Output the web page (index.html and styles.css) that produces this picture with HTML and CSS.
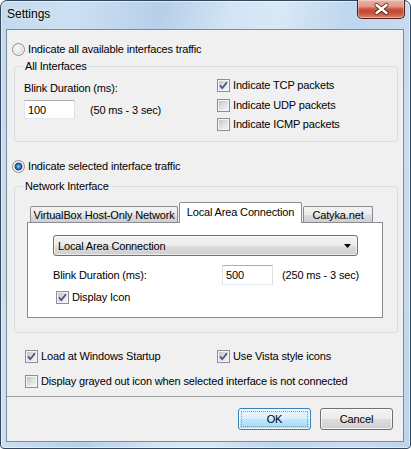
FILE: index.html
```html
<!DOCTYPE html>
<html>
<head>
<meta charset="utf-8">
<title>Settings</title>
<link rel="stylesheet" href="styles.css">
</head>
<body>
<div class="window">
  <div class="titlebar">
    <span class="title">Settings</span>
    <div class="close">
      <svg width="46" height="18" viewBox="0 0 46 18">
        <path d="M18.5 5 L28.5 13 M28.5 5 L18.5 13" stroke="#3a1810" stroke-width="4.2" stroke-linecap="round" fill="none" opacity="0.75"/>
        <path d="M18.5 5 L28.5 13 M28.5 5 L18.5 13" stroke="#ffffff" stroke-width="2.4" stroke-linecap="round" fill="none"/>
      </svg>
    </div>
  </div>
  <div class="client">
    <div class="content">
      <label class="opt row1"><span class="rb"></span>Indicate all available interfaces traffic</label>

      <div class="group g1">
        <div class="gtitle">All Interfaces</div>
        <div class="g1-body">
          <div class="g1-left">
            <div class="lbl">Blink Duration (ms):</div>
            <div class="input-row">
              <span class="edit">100</span>
              <span class="range">(50 ms - 3 sec)</span>
            </div>
          </div>
          <div class="g1-right">
            <label class="opt"><span class="cb"><svg width="11" height="11" viewBox="0 0 11 11"><path d="M2 5.4 L4.3 8.2 L8.9 2.2"/></svg></span>Indicate TCP packets</label>
            <label class="opt udp"><span class="cb"></span>Indicate UDP packets</label>
            <label class="opt icmp"><span class="cb"></span>Indicate ICMP packets</label>
          </div>
        </div>
      </div>

      <label class="opt row2"><span class="rb on"></span>Indicate selected interface traffic</label>

      <div class="group g2">
        <div class="gtitle">Network Interface</div>
        <div class="tabctl">
          <div class="tabs">
            <div class="tab t1">VirtualBox Host-Only Network</div>
            <div class="tab sel">Local Area Connection</div>
            <div class="tab t3">Catyka.net</div>
          </div>
          <div class="panel">
            <div class="combo">
              <span>Local Area Connection</span>
              <svg width="7" height="4" viewBox="0 0 7 4"><path d="M0 0 H7 L3.5 4 Z" fill="#000"/></svg>
            </div>
            <div class="blink-row">
              <span class="lbl2">Blink Duration (ms):</span>
              <span class="edit e500">500</span>
              <span class="range2">(250 ms - 3 sec)</span>
            </div>
            <label class="opt di"><span class="cb"><svg width="11" height="11" viewBox="0 0 11 11"><path d="M2 5.4 L4.3 8.2 L8.9 2.2"/></svg></span>Display Icon</label>
          </div>
        </div>
      </div>

      <div class="bottom-opts">
        <div class="two">
          <label class="opt c1"><span class="cb"><svg width="11" height="11" viewBox="0 0 11 11"><path d="M2 5.4 L4.3 8.2 L8.9 2.2"/></svg></span>Load at Windows Startup</label>
          <label class="opt"><span class="cb"><svg width="11" height="11" viewBox="0 0 11 11"><path d="M2 5.4 L4.3 8.2 L8.9 2.2"/></svg></span>Use Vista style icons</label>
        </div>
        <label class="opt grayed"><span class="cb"></span>Display grayed out icon when selected interface is not connected</label>
      </div>
    </div>
    <div class="footer">
      <button class="btn default"><span class="focus">OK</span></button>
      <button class="btn">Cancel</button>
    </div>
  </div>
</div>
</body>
</html>
```

FILE: styles.css
```css
* { box-sizing: border-box; }
html, body { margin: 0; padding: 0; background: #ffffff; }
body {
  font-family: "Liberation Sans", Arial, sans-serif;
  font-size: 11px;
  letter-spacing: -0.15px;
  color: #000;
}

.window {
  width: 411px;
  height: 449px;
  border: 1px solid #34475c;
  border-radius: 7px 7px 4px 4px;
  padding: 0 6px 6px 5px;
  display: flex;
  flex-direction: column;
  background:
    linear-gradient(100deg, #c3d9ee 0%, #cde0f3 15%, #b6cfea 33%, #d3e5f5 48%, #d8e8f6 58%, #bed6ee 72%, #c9ddf1 88%, #bcd4ec 100%);
  box-shadow: inset 0 0 0 1px rgba(255,255,255,0.5);
}

.titlebar {
  flex: none;
  height: 29px;
  margin: -1px -1px 0 0;
  display: flex;
  align-items: flex-start;
}
.title {
  padding: 6px 0 0 1px;
  font-size: 12px;
  line-height: 16px;
  letter-spacing: 0;
  color: #000;
  text-shadow: 0 0 6px rgba(255,255,255,0.9);
}
.close {
  margin-left: auto;
  width: 48px;
  height: 19px;
  border: 1px solid #4e1f16;
  border-top: none;
  border-radius: 0 0 5px 5px;
  background: linear-gradient(#eab0a3 0%, #e19a8a 35%, #c9573f 50%, #c24a32 65%, #cf6650 85%, #dc8a78 100%);
  box-shadow: inset 0 0 0 1px rgba(255,255,255,0.35);
  display: flex;
}

.client {
  flex: none;
  height: 413px;
  border: 1px solid #7d8b9b;
  background: #f0f0f0;
  display: flex;
  flex-direction: column;
}
.content {
  flex: 1;
}

.opt {
  display: flex;
  align-items: center;
  gap: 3px;
  height: 16px;
  white-space: nowrap;
}

.rb {
  flex: none;
  width: 13px;
  height: 13px;
  border-radius: 50%;
  border: 1px solid #8f8f8f;
  background: radial-gradient(circle at 40% 40%, #fafafa 0, #e6e6e6 45%, #c9cbce 100%);
  box-shadow: inset 0 0 0 1px #f6f6f6;
}
.rb.on {
  background:
    radial-gradient(circle at 50% 50%, #9ad4f8 0, #3f8fd6 1.6px, #1d4f98 3.2px, #2a5a9d 3.7px, rgba(0,0,0,0) 4.3px),
    radial-gradient(circle at 40% 40%, #fafafa 0, #e6e6e6 45%, #c9cbce 100%);
}

.cb {
  flex: none;
  width: 13px;
  height: 13px;
  border: 1px solid #8f8f8f;
  background: linear-gradient(135deg, #b8bcc2 0%, #dcdde0 45%, #f3f3f3 85%, #fafafa 100%);
  box-shadow: inset 0 0 0 1px #f4f4f4;
  display: flex;
}
.cb svg path {
  fill: none;
  stroke: #3f5288;
  stroke-width: 1.7;
}

.row1 { margin: 11px 0 0 5px; }
.row2 { margin: 16px 0 0 5px; }

.group {
  margin: 9px 5px 0 7px;
  border: 1px solid #d5dfe5;
  border-radius: 3px;
}
.g2 { margin-top: 12px; }
.gtitle {
  width: fit-content;
  margin: -7px 0 0 8px;
  padding: 0 2px;
  line-height: 13px;
  background: #f0f0f0;
}

.g1-body {
  display: flex;
  padding: 0 0 9px 9px;
}
.g1-left {
  width: 193px;
  padding-top: 7px;
}
.lbl { line-height: 16px; }
.input-row {
  margin-top: 4px;
  display: flex;
  align-items: center;
  gap: 15px;
}
.edit {
  display: flex;
  align-items: center;
  width: 51px;
  height: 19px;
  padding: 0 3px;
  background: #fff;
  border: 1px solid;
  border-color: #abadb3 #dbdfe6 #e3e9ef #e2e3ea;
}
.g1-right {
  padding-top: 4px;
}
.g1-right .udp { margin-top: 4px; }
.g1-right .icmp { margin-top: 3px; }

.tabctl {
  margin: 9px 14px 14px 12px;
}
.tabs {
  display: flex;
  align-items: flex-end;
  height: 20px;
  padding-left: 3px;
}
.tab {
  height: 16px;
  border: 1px solid #898c95;
  border-bottom: none;
  border-radius: 2px 2px 0 0;
  background: linear-gradient(#f3f3f3 0%, #ebebeb 50%, #dddddd 51%, #cfcfcf 100%);
  display: flex;
  align-items: center;
  justify-content: center;
  white-space: nowrap;
}
.t1 { width: 148px; }
.sel {
  width: 123px;
  height: 21px;
  margin: 0 0 -1px 1px;
  background: #fff;
  padding-bottom: 3px;
  position: relative;
  z-index: 1;
}
.t3 { width: 70px; margin-left: 1px; }

.panel {
  background: #fff;
  border: 1px solid #898c95;
  padding: 12px 0 12px 25px;
}
.combo {
  width: 305px;
  height: 21px;
  border: 1px solid #707070;
  border-radius: 3px;
  background: linear-gradient(#f2f2f2 0%, #ebebeb 50%, #dddddd 51%, #cfcfcf 100%);
  box-shadow: inset 0 0 0 1px rgba(255,255,255,0.6);
  display: flex;
  align-items: center;
  justify-content: space-between;
  padding: 0 6px 0 4px;
}
.blink-row {
  margin-top: 9px;
  display: flex;
  align-items: center;
  height: 20px;
}
.lbl2 { width: 169px; }
.e500 { height: 20px; }
.range2 { margin-left: 9px; }
.di { margin: 4px 0 0 3px; }

.bottom-opts {
  padding-left: 18px;
  margin-top: 15px;
}
.two { display: flex; }
.c1 { width: 192px; }
.grayed { margin-top: 9px; }

.footer {
  flex: none;
  height: 45px;
  border-top: 1px solid #a0a0a0;
  display: flex;
  justify-content: flex-end;
  gap: 9px;
  padding: 11px 10px 0 0;
}
.btn {
  width: 73px;
  height: 22px;
  border: 1px solid #707070;
  border-radius: 3px;
  background: linear-gradient(#f2f2f2 0%, #ebebeb 50%, #dddddd 51%, #cfcfcf 100%);
  box-shadow: inset 0 0 0 1px rgba(255,255,255,0.7);
  font-family: "Liberation Sans", Arial, sans-serif;
  font-size: 11px;
  letter-spacing: -0.15px;
  color: #000;
  padding: 0;
  display: flex;
  align-items: center;
  justify-content: center;
}
.btn.default {
  border-color: #3c7fb1;
  background: linear-gradient(#eaf6fd 0%, #d9f0fc 50%, #bee6fd 51%, #a7d9f5 100%);
  box-shadow: inset 0 0 0 1px rgba(255,255,255,0.8), 0 0 0 0 transparent;
  padding: 2px;
}
.focus {
  width: 100%;
  height: 100%;
  border: 1px dotted #7aa0bf;
  display: flex;
  align-items: center;
  justify-content: center;
}
```
